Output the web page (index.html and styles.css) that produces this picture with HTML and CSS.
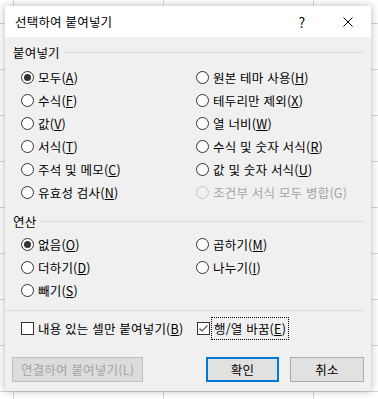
FILE: index.html
```html
<!doctype html>
<html lang="ko">
	<head>
		<meta charset="UTF-8" />
		<meta name="viewport" content="width=device-width, initial-scale=1.0" />
		<title>선택하여 붙여넣기</title>
		<link rel="stylesheet" href="styles.css">
	</head>
	<body>
		<div class="dialog">
			<div class="titlebar">
				<span class="title">선택하여 붙여넣기</span>
				<span class="caption-btn help">?</span>
				<span class="caption-btn close">
					<svg width="10" height="10" viewBox="0 0 10 10"><path d="M0.5 0.5 L9.5 9.5 M9.5 0.5 L0.5 9.5" stroke="#000" stroke-width="1" fill="none"/></svg>
				</span>
			</div>

			<div class="content">
				<div class="group-head">
					<span>붙여넣기</span>
					<span class="rule"></span>
				</div>
				<div class="options paste-options">
					<label class="option"><span class="radio checked"></span><span>모두(<u>A</u>)</span></label>
					<label class="option"><span class="radio"></span><span>원본 테마 사용(<u>H</u>)</span></label>
					<label class="option"><span class="radio"></span><span>수식(<u>F</u>)</span></label>
					<label class="option"><span class="radio"></span><span>테두리만 제외(<u>X</u>)</span></label>
					<label class="option"><span class="radio"></span><span>값(<u>V</u>)</span></label>
					<label class="option"><span class="radio"></span><span>열 너비(<u>W</u>)</span></label>
					<label class="option"><span class="radio"></span><span>서식(<u>T</u>)</span></label>
					<label class="option"><span class="radio"></span><span>수식 및 숫자 서식(<u>R</u>)</span></label>
					<label class="option"><span class="radio"></span><span>주석 및 메모(<u>C</u>)</span></label>
					<label class="option"><span class="radio"></span><span>값 및 숫자 서식(<u>U</u>)</span></label>
					<label class="option"><span class="radio"></span><span>유효성 검사(<u>N</u>)</span></label>
					<label class="option disabled"><span class="radio"></span><span>조건부 서식 모두 병합(G)</span></label>
				</div>

				<div class="group-head op-head">
					<span>연산</span>
					<span class="rule"></span>
				</div>
				<div class="options op-options">
					<label class="option"><span class="radio checked"></span><span>없음(<u>O</u>)</span></label>
					<label class="option"><span class="radio"></span><span>곱하기(<u>M</u>)</span></label>
					<label class="option"><span class="radio"></span><span>더하기(<u>D</u>)</span></label>
					<label class="option"><span class="radio"></span><span>나누기(<u>I</u>)</span></label>
					<label class="option"><span class="radio"></span><span>빼기(<u>S</u>)</span></label>
				</div>

				<div class="separator"></div>

				<div class="checks">
					<label class="check-item first"><span class="checkbox"></span><span>내용 있는 셀만 붙여넣기(<u>B</u>)</span></label>
					<label class="check-item">
						<span class="checkbox checked">
							<svg width="11" height="11" viewBox="0 0 11 11"><path d="M1.5 5.5 L4 8 L9.5 2.5" stroke="#555" stroke-width="1.2" fill="none"/></svg>
						</span>
						<span class="focus">행/열 바꿈(<u>E</u>)</span>
					</label>
				</div>

				<div class="buttons">
					<button class="btn link-btn" disabled>연결하여 붙여넣기(L)</button>
					<span class="spacer"></span>
					<button class="btn default">확인</button>
					<button class="btn">취소</button>
				</div>
			</div>
		</div>
	</body>
</html>
```

FILE: styles.css
```css
html, body {
	margin: 0;
}
body {
	width: 378px;
	height: 399px;
	box-sizing: border-box;
	padding: 6px 0 0 5px;
	overflow: hidden;
	font-family: "Noto Sans CJK KR", "Noto Sans", sans-serif;
	font-size: 12.5px;
	letter-spacing: 0.2px;
	color: #000;
	background-color: #fff;
	background-image:
		linear-gradient(to right, #d6d6d6 1px, transparent 1px),
		linear-gradient(to bottom, #d6d6d6 1px, transparent 1px);
	background-size: 150px 46px;
	background-position: 13px 23px;
}
.dialog {
	width: 366px;
	height: 385px;
	background-color: #f0f0f0;
	box-shadow: 0 0 8px rgba(0, 0, 0, 0.28);
	display: flex;
	flex-direction: column;
}
.titlebar {
	height: 31px;
	background-color: #fff;
	display: flex;
	align-items: center;
	padding-left: 10px;
}
.title {
	flex: 1;
}
.caption-btn {
	width: 46px;
	height: 31px;
	display: flex;
	align-items: center;
	justify-content: center;
}
.help {
	font-size: 14px;
}
.content {
	flex: 1;
	padding: 0 7px 0 8px;
	display: flex;
	flex-direction: column;
}
.group-head {
	height: 16px;
	margin-top: 7px;
	display: flex;
	align-items: center;
	gap: 5px;
}
.rule {
	flex: 1;
	height: 1px;
	background-color: #dcdcdc;
}
.op-head {
	margin-top: 9px;
}
.options {
	display: grid;
	grid-template-columns: 175px 1fr;
	grid-auto-rows: 23px;
	padding-left: 8px;
}
.paste-options {
	margin-top: 6px;
}
.op-options {
	margin-top: 4px;
}
.option {
	display: flex;
	align-items: center;
	gap: 4px;
	white-space: nowrap;
}
.radio {
	width: 13px;
	height: 13px;
	box-sizing: border-box;
	border: 1px solid #333;
	border-radius: 50%;
	background-color: #fff;
	display: flex;
	align-items: center;
	justify-content: center;
}
.radio.checked::after {
	content: "";
	width: 7px;
	height: 7px;
	border-radius: 50%;
	background-color: #333;
}
.disabled {
	color: #a3a3a3;
}
.disabled .radio {
	border-color: #c4c4c4;
	background-color: #f0f0f0;
}
.separator {
	height: 1px;
	margin: 8px 0 0 -8px;
	background-color: #dcdcdc;
}
.checks {
	height: 23px;
	margin-top: 6px;
	padding-left: 8px;
	display: flex;
	align-items: center;
}
.check-item {
	display: flex;
	align-items: center;
	gap: 5px;
	white-space: nowrap;
}
.check-item.first {
	width: 176px;
	gap: 4px;
}
.checkbox {
	width: 13px;
	height: 13px;
	box-sizing: border-box;
	border: 1px solid #333;
	background-color: #fff;
	display: flex;
	align-items: center;
	justify-content: center;
}
.focus {
	outline: 1px dotted #000;
	outline-offset: 1px;
	margin-left: -2px;
	padding: 0 1px;
}
.buttons {
	margin-top: 17px;
	margin-left: -1px;
	display: flex;
	gap: 11px;
}
.spacer {
	flex: 1;
}
.btn {
	height: 25px;
	width: 74px;
	padding: 0;
	font-family: inherit;
	font-size: 12.5px;
	letter-spacing: 0.2px;
	color: #000;
	background-color: #e1e1e1;
	border: 1px solid #adadad;
}
.btn.default {
	width: 73px;
	border: 2px solid #0078d7;
}
.link-btn {
	width: 131px;
	color: #a3a3a3;
	background-color: #dcdcdc;
	border-color: #bfbfbf;
}
```
